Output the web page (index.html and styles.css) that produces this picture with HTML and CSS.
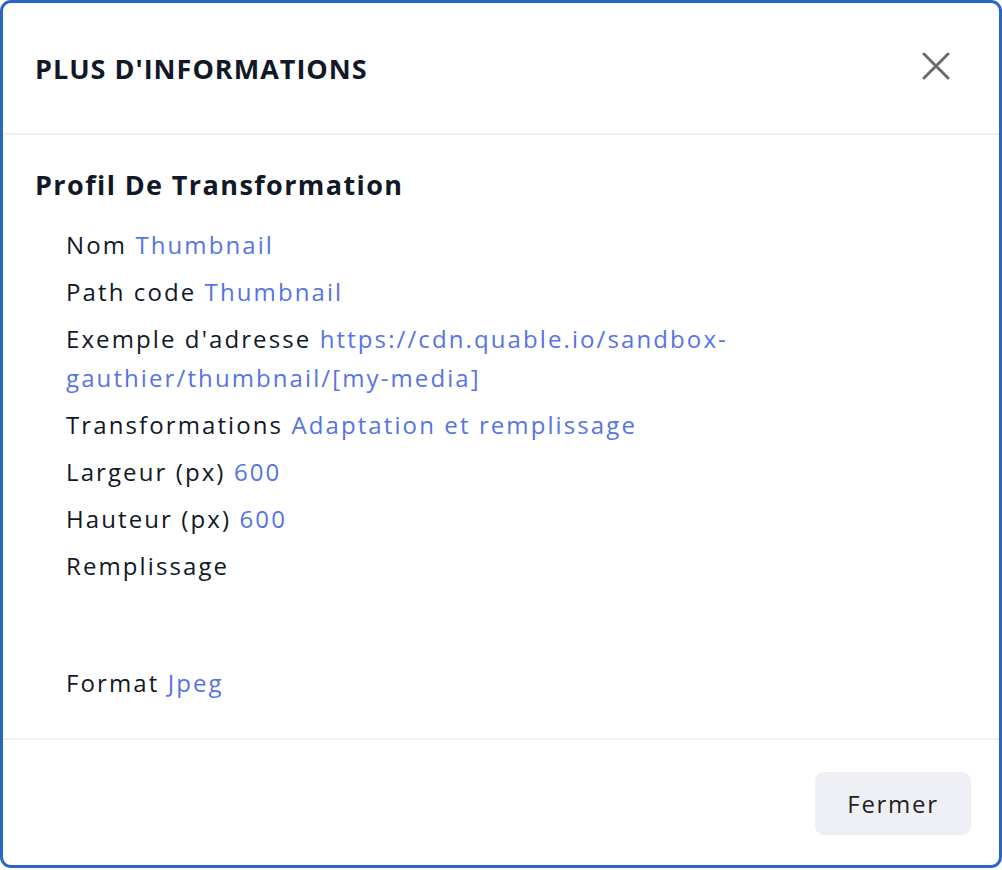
FILE: index.html
```html
<!DOCTYPE html>
<html lang="fr">
<head>
<meta charset="utf-8">
<title>Plus d'informations</title>
<link rel="stylesheet" href="styles.css">
</head>
<body>
<div class="modal">
  <header class="modal-header">
    <h1 class="modal-title">PLUS D'INFORMATIONS</h1>
    <button class="close-btn" aria-label="Fermer">
      <svg width="28" height="28" viewBox="0 0 28 28" fill="none" stroke="#6b6b6b" stroke-width="3" stroke-linecap="round">
        <path d="M2 2 L26 26 M26 2 L2 26"/>
      </svg>
    </button>
  </header>
  <section class="modal-body">
    <h2 class="section-title">Profil De Transformation</h2>
    <ul class="props">
      <li class="prop">Nom <span class="val">Thumbnail</span></li>
      <li class="prop">Path code <span class="val">Thumbnail</span></li>
      <li class="prop">Exemple d'adresse <span class="val">https://cdn.quable.io/sandbox-gauthier/thumbnail/[my-media]</span></li>
      <li class="prop">Transformations <span class="val">Adaptation et remplissage</span></li>
      <li class="prop">Largeur (px) <span class="val">600</span></li>
      <li class="prop">Hauteur (px) <span class="val">600</span></li>
      <li class="prop">Remplissage <div class="fill-preview"></div></li>
      <li class="prop">Format <span class="val">Jpeg</span></li>
    </ul>
  </section>
  <footer class="modal-footer">
    <button class="btn">Fermer</button>
  </footer>
</div>
</body>
</html>
```
FILE: styles.css
```css
html, body {
  margin: 0;
  padding: 0;
  background: #ffffff;
}
body {
  font-family: "Open Sans", "Noto Sans", sans-serif;
  color: #111827;
  width: 1002px;
  height: 870px;
}
.modal {
  box-sizing: border-box;
  width: 1002px;
  height: 868px;
  border: 3px solid #2b64c9;
  border-radius: 11px;
  background: #fff;
  display: flex;
  flex-direction: column;
}
.modal-header {
  display: flex;
  align-items: center;
  justify-content: space-between;
  height: 130px;
  padding: 0 49px 0 32px;
  border-bottom: 2px solid #f1f1f5;
}
.modal-title {
  margin: 0;
  font-size: 27px;
  line-height: 40px;
  font-weight: 700;
  letter-spacing: 1px;
  color: #111827;
  padding-top: 1px;
}
.close-btn {
  background: none;
  border: 0;
  padding: 0;
  width: 28px;
  height: 28px;
  margin-bottom: 4px;
  cursor: pointer;
}
.close-btn svg { display: block; }
.modal-body {
  flex: 1;
  padding: 30px 32px 0 32px;
  border-bottom: 2px solid #f1f1f5;
}
.section-title {
  margin: 0;
  font-size: 27px;
  line-height: 40px;
  font-weight: 700;
  letter-spacing: 1.4px;
  color: #111827;
}
.props {
  list-style: none;
  margin: 20px 0 0 0;
  padding: 0 0 0 31px;
  display: flex;
  flex-direction: column;
  gap: 8px;
}
.prop {
  font-size: 24px;
  line-height: 39px;
  letter-spacing: 2.1px;
  color: #111827;
}
.val {
  color: #5674e4;
}
.fill-preview {
  height: 70px;
}
.modal-footer {
  display: flex;
  justify-content: flex-end;
  padding: 32px 28px 30px;
}
.btn {
  font-family: inherit;
  font-size: 24px;
  letter-spacing: 1.7px;
  color: #222;
  background: #eff0f5;
  border: 0;
  border-radius: 9px;
  width: 156px;
  height: 63px;
}
```
